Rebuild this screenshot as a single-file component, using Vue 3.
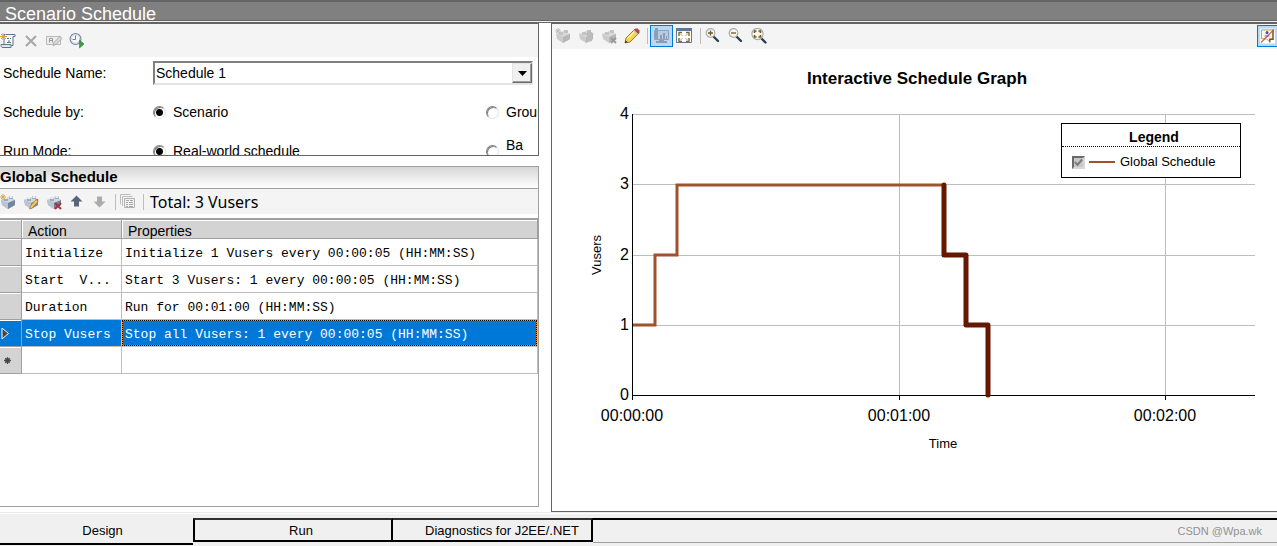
<script setup>
import { ref } from 'vue'

const schedule = ref('Schedule 1')
const scheduleBy = ref('scenario')
const runMode = ref('real')
const activeTab = ref('Design')

const rows = [
  { action: 'Initialize', props: 'Initialize 1 Vusers every 00:00:05 (HH:MM:SS)' },
  { action: 'Start  V...', props: 'Start 3 Vusers: 1 every 00:00:05 (HH:MM:SS)' },
  { action: 'Duration', props: 'Run for 00:01:00 (HH:MM:SS)' },
  { action: 'Stop Vusers', props: 'Stop all Vusers: 1 every 00:00:05 (HH:MM:SS)', selected: true },
]

const yTicks = [
  { label: '4', y: 65 },
  { label: '3', y: 135 },
  { label: '2', y: 206 },
  { label: '1', y: 276 },
]
const xTicks = [
  { label: '00:00:00', x: 80 },
  { label: '00:01:00', x: 347 },
  { label: '00:02:00', x: 613 },
]
const tabs = ['Design', 'Run', 'Diagnostics for J2EE/.NET']
</script>

<template>
  <div class="app">
    <svg class="defs" aria-hidden="true">
      <symbol id="brick" viewBox="0 0 16 16">
        <path d="M1 6l8-3 6 3v5l-7 4-6-4z" fill="#a3b0c0" />
        <path d="M1 6l8-3 6 3-7 3z" fill="#cfd8e3" />
        <path d="M1 6l7 3v6l-6-4z" fill="#b9c5d3" />
        <path d="M8 9l7-3v5l-7 4z" fill="#75859a" />
        <path d="M4 4h4v3H4zM9 2h4v3H9z" fill="#98a8bb" />
        <path d="M4 4c0-1.500 4-1.500 4 0s-4 1.500-4 0zM9 3c0-1.500 4-1.500 4 0s-4 1.500-4 0z" fill="#e6ebf1" />
      </symbol>
      <symbol id="brick-off" viewBox="0 0 16 16">
        <path d="M1 6l8-3 6 3v5l-7 4-6-4z" fill="#cbcbcb" />
        <path d="M1 6l8-3 6 3-7 3z" fill="#d9d9d9" />
        <path d="M8 9l7-3v5l-7 4z" fill="#b6b6b6" />
        <path d="M4 4h4v3H4zM9 2h4v3H9z" fill="#c4c4c4" />
      </symbol>
      <symbol id="lens" viewBox="0 0 16 16">
        <path d="M8.500 8.500l4.500 4.500" stroke="#2c3c57" stroke-width="2.400" stroke-linecap="round" />
        <circle cx="5.500" cy="5" r="4.300" fill="#fbf7e4" stroke="#a9adb3" stroke-width="1.200" />
      </symbol>
    </svg>

    <header class="title"><h1>Scenario Schedule</h1></header>

    <main class="main">
      <div class="left">
        <section class="pane setup">
          <div class="toolbar tall">
            <button type="button" aria-label="New schedule">
              <svg class="icon" viewBox="0 0 16 16">
                <path d="M4 1.500h11v2h-2v9H4z" fill="#f4f7fa" stroke="#5e748f" />
                <path d="M1 11.500h10v3H3c-2 0-2-2-2-3z" fill="#dfe7ef" stroke="#5e748f" />
                <path d="M7 5.500h2M10 5.500h1M7 9.500h4M9 7v2" stroke="#63748a" />
                <path d="M3 0v7M0 3.500h7M1 1l5 5M6 1L1 6" stroke="#dba537" />
              </svg>
            </button>
            <button type="button" aria-label="Delete schedule" disabled>
              <svg class="icon" viewBox="0 0 16 16">
                <path d="M3 3l10 10M13 3L3 13" stroke="#a9a9a9" stroke-width="2.200" />
              </svg>
            </button>
            <button type="button" aria-label="Rename schedule" disabled>
              <svg class="icon" viewBox="0 0 16 16">
                <path d="M.5 3.500h14v8H.5z" fill="#ececec" stroke="#b8b8b8" />
                <path d="M3.500 9.500v-4h3v4M3.500 7.500h3" fill="none" stroke="#9c9c9c" />
                <path d="M7 12.500l1-3 6-6 2 2-6 6z" fill="#dadada" stroke="#aaa" />
              </svg>
            </button>
            <button type="button" aria-label="Start time">
              <svg class="icon" viewBox="0 0 16 16">
                <circle cx="6.500" cy="6" r="5.400" fill="#f5f9fd" stroke="#7487a2" stroke-width="1.200" />
                <circle cx="6.500" cy="6" r="4.200" fill="none" stroke="#cdd9e6" />
                <path d="M6.500 2.500v4h-3" fill="none" stroke="#a37b36" />
                <path d="M10.500 7l4.500 4-4.500 4z" fill="#3f9a46" stroke="#2d7d37" stroke-width=".6" />
              </svg>
            </button>
          </div>
          <form class="form" @submit.prevent>
            <label for="schedule-name">Schedule Name:</label>
            <div class="combo">
              <select id="schedule-name" v-model="schedule">
                <option>Schedule 1</option>
              </select>
              <span class="drop" aria-hidden="true">
                <svg viewBox="0 0 9 5"><path d="M0 0h9L4.500 5z" /></svg>
              </span>
            </div>
            <span id="by-label">Schedule by:</span>
            <div class="options" role="radiogroup" aria-labelledby="by-label">
              <label><input v-model="scheduleBy" type="radio" name="by" value="scenario">Scenario</label>
              <label><input v-model="scheduleBy" type="radio" name="by" value="group">Grou</label>
            </div>
            <span id="mode-label">Run Mode:</span>
            <div class="options" role="radiogroup" aria-labelledby="mode-label">
              <label><input v-model="runMode" type="radio" name="mode" value="real">Real-world schedule</label>
              <label class="raised"><input v-model="runMode" type="radio" name="mode" value="basic"><span>Ba</span></label>
            </div>
          </form>
        </section>

        <section class="pane global">
          <h2>Global Schedule</h2>
          <div class="toolbar">
            <button type="button" aria-label="Add action">
              <svg class="icon" viewBox="0 0 16 16">
                <use href="#brick" />
                <path d="M3 0v6M0 3h6M1 1l4 4M5 1L1 5" stroke="#d9a94c" />
              </svg>
            </button>
            <button type="button" aria-label="Edit action">
              <svg class="icon" viewBox="0 0 16 16">
                <use href="#brick" />
                <path d="M6.500 15l1-3 5.500-6.500 2 2L9 14z" fill="#f3cf55" stroke="#b07a2b" stroke-width=".7" />
                <path d="M13 5.500l1-1 1.500 1.500-1 1z" fill="#c64b4b" />
              </svg>
            </button>
            <button type="button" aria-label="Delete action">
              <svg class="icon" viewBox="0 0 16 16">
                <use href="#brick" />
                <path d="M9 9l6 6M15 9l-6 6" stroke="#a8323c" stroke-width="2" />
              </svg>
            </button>
            <button type="button" aria-label="Move up">
              <svg class="icon" viewBox="0 0 16 16">
                <path d="M7.500 1.500L13.500 7.500h-3.500v5H5v-5H1.500z" fill="#56657b" />
              </svg>
            </button>
            <button type="button" aria-label="Move down" disabled>
              <svg class="icon" viewBox="0 0 16 16">
                <path d="M7.500 13.500L1.500 7.500H5v-5h5v5h3.500z" fill="#ababab" />
              </svg>
            </button>
            <span class="sep"></span>
            <button type="button" aria-label="Copy" disabled>
              <svg class="icon" viewBox="0 0 16 16">
                <path d="M.5 10.500v-10h10M2.500 12v-9.500h10" fill="none" stroke="#bdbdbd" />
                <path d="M4.500 4.500h10v9h-10z" fill="#f1f1f1" stroke="#b0b0b0" />
                <path d="M6 6.500h3M10 6.500h3M6 8.500h2M9 8.500h4M6 10.500h2M9 10.500h4M6 12.500h2M9 12.500h4" stroke="#a6a6a6" />
              </svg>
            </button>
            <span class="sep"></span>
            <span class="total">Total: 3 Vusers</span>
          </div>
          <table class="grid">
            <colgroup><col class="c-mark"><col class="c-action"><col></colgroup>
            <thead>
              <tr><th aria-label="Row"></th><th scope="col">Action</th><th scope="col">Properties</th></tr>
            </thead>
            <tbody>
              <tr v-for="row in rows" :key="row.action" :class="{ selected: row.selected }">
                <th scope="row">
                  <svg v-if="row.selected" class="mark" viewBox="0 0 9 13"><path d="M1 1v11l6.500-5.500z" fill="#4a4643" stroke="#f7f7f7" /></svg>
                </th>
                <td>{{ row.action }}</td>
                <td><div class="value">{{ row.props }}</div></td>
              </tr>
              <tr>
                <th scope="row">
                  <svg class="mark star" viewBox="0 0 8 8"><path d="M4 1v6M1 4h6M2 2l4 4M6 2L2 6" stroke="#444" stroke-width="1.200" /></svg>
                </th>
                <td></td>
                <td></td>
              </tr>
            </tbody>
          </table>
        </section>
      </div>

      <section class="graph">
        <div class="toolbar">
          <button type="button" aria-label="Add action" disabled>
            <svg class="icon" viewBox="0 0 16 16">
              <use href="#brick-off" />
              <path d="M3 0v6M0 3h6M1 1l4 4M5 1L1 5" stroke="#bcbcbc" />
            </svg>
          </button>
          <button type="button" aria-label="Split action" disabled>
            <svg class="icon" viewBox="0 0 16 16">
              <use href="#brick-off" />
              <path d="M9 14V7H7l4-5 5 4-2 1v6z" fill="#bcbcbc" />
            </svg>
          </button>
          <button type="button" aria-label="Delete action" disabled>
            <svg class="icon" viewBox="0 0 16 16">
              <use href="#brick-off" />
              <path d="M10 10l5 5M15 10l-5 5" stroke="#979797" stroke-width="1.800" />
            </svg>
          </button>
          <button type="button" aria-label="Edit mode">
            <svg class="icon" viewBox="0 0 16 16">
              <path d="M1 15l1-5 9-9 4 4-9 9z" fill="#f5d451" stroke="#9b6a1e" stroke-width=".9" />
              <path d="M4 10l7-7" stroke="#fff3a8" stroke-width="1.500" />
              <path d="M10 2l1.500-1.500h2l2 2v2L14 6z" fill="#bd3f49" />
              <path d="M9.500 2.500l4 4" stroke="#c8c8c8" stroke-width="1.200" />
              <path d="M1 15l.7-2.700 2 2z" fill="#333" />
            </svg>
          </button>
          <span class="sep"></span>
          <button type="button" class="on" aria-label="View mode" aria-pressed="true">
            <svg class="icon" viewBox="0 0 16 16">
              <path d="M1.500 2.500h14v9h-14z" fill="#b4cbe2" stroke="#8fa3b8" />
              <path d="M2 0h3v11H2zM7 7h2v4H7zM10 5h2v6h-2zM13 8h1v3h-1z" fill="#8ba0b8" />
              <path d="M6 12h5v1h3v2H3v-2h3z" fill="#899cb2" />
            </svg>
          </button>
          <button type="button" aria-label="Full view">
            <svg class="icon" viewBox="0 0 16 16">
              <path d="M.5.5h15v14H.5z" fill="#fff" stroke="#61779a" />
              <path d="M0 0h16v3H0z" fill="#5f779c" />
              <path d="M3 8V4.500h3M10 4.500h3V8M13 10v3.500h-3M6 13.500H3V10" fill="none" stroke="#7b6a35" stroke-width="1.400" />
              <path d="M4 5.500l2.500 2.500M12 5.500L9.500 8M4 12.500L6.500 10M12 12.500L9.500 10" stroke="#b9a668" />
            </svg>
          </button>
          <span class="sep wide"></span>
          <button type="button" aria-label="Zoom in">
            <svg class="icon" viewBox="0 0 16 16"><use href="#lens" /><path d="M5.500 2.500v5M3 5h5" stroke="#6b5a2a" stroke-width="1.300" /></svg>
          </button>
          <button type="button" aria-label="Zoom out">
            <svg class="icon" viewBox="0 0 16 16"><use href="#lens" /><path d="M3 5h5" stroke="#6b5a2a" stroke-width="1.300" /></svg>
          </button>
          <button type="button" aria-label="Zoom to fit">
            <svg class="icon" viewBox="0 0 16 16">
              <path d="M10.500 10.500l4 4" stroke="#2c3c57" stroke-width="2.400" stroke-linecap="round" />
              <circle cx="6.500" cy="6" r="5.600" fill="#fbf7e4" stroke="#a9adb3" stroke-width="1.200" />
              <path d="M3.500 5V3h2M7.500 3h2v2M9.500 7v2h-2M5.500 9h-2V7" fill="none" stroke="#6b5a2a" stroke-width="1.600" />
            </svg>
          </button>
          <button type="button" class="on last" aria-label="Hide tips" aria-pressed="true">
            <svg class="icon" viewBox="0 0 16 16">
              <path d="M0 0h16v16H0z" fill="#fff" />
              <path d="M1.500 1.500h12v9.500H10v3l-3-3H1.500z" fill="#fdf8e6" stroke="#b5974c" />
              <path d="M14 1v10.500h-3.500V15" fill="none" stroke="#6b5320" stroke-width="1.300" />
              <path d="M6.500 3.500h2v2h-2zM5 8h5" fill="#4a4bc0" stroke="#4a4bc0" />
              <path d="M1 15L15 1" stroke="#cc4a58" stroke-width="1.200" />
            </svg>
          </button>
        </div>

        <div class="chart">
          <svg class="plot" viewBox="0 0 725 450" role="img" aria-label="Interactive Schedule Graph">
            <text class="heading" x="365" y="35">Interactive Schedule Graph</text>
            <g class="lines">
              <rect v-for="t in yTicks" :key="t.label" x="80" :y="t.y" width="623" height="1" />
              <rect v-for="t in xTicks.slice(1)" :key="t.label" :x="t.x" y="65" width="1" height="281" />
            </g>
            <path class="run" d="M81 276H103V206H125V136H392" />
            <g class="axes">
              <rect x="80" y="65" width="1" height="285" />
              <rect x="80" y="346" width="623" height="1" />
              <rect v-for="t in xTicks" :key="t.label" :x="t.x" y="346" width="1" height="5" />
            </g>
            <path class="stop" d="M392 136V206H414V276H436V346" />
            <g class="ylabels">
              <text v-for="t in yTicks" :key="t.label" x="77" :y="t.y + 5">{{ t.label }}</text>
              <text x="77" y="351">0</text>
            </g>
            <g class="xlabels">
              <text v-for="t in xTicks" :key="t.label" :x="t.x" y="372">{{ t.label }}</text>
            </g>
            <text class="axis-name" x="391" y="399">Time</text>
            <text class="axis-name" transform="translate(49 206) rotate(-90)">Vusers</text>
          </svg>
          <div class="legend">
            <h3>Legend</h3>
            <label>
              <input type="checkbox" checked disabled>
              <svg class="tick" viewBox="0 0 9 9" aria-hidden="true"><path d="M1 4l2.500 3L8 1.500" /></svg>
              <span class="swatch"></span>
              Global Schedule
            </label>
          </div>
        </div>
      </section>
    </main>

    <nav class="tabs">
      <button
        v-for="(tab, i) in tabs"
        :key="tab"
        type="button"
        :class="['tab', 'tab-' + i, { active: tab === activeTab }]"
        @click="activeTab = tab"
      >{{ tab }}</button>
      <div class="rest">CSDN @Wpa.wk</div>
    </nav>
  </div>
</template>

<style>
body {
  background: #fff;
}
</style>

<style scoped>
.app,
.app * {
  box-sizing: border-box;
}
.app {
  min-height: 100vh;
  display: flex;
  flex-direction: column;
  font: 14px/16px "Liberation Sans", Arial, sans-serif;
  color: #000;
  background: #fff;
}
h1,
h2,
h3 {
  margin: 0;
}
button,
select {
  font: inherit;
  color: inherit;
}
.defs {
  position: absolute;
  width: 0;
  height: 0;
}
.title {
  height: 22px;
  padding-left: 5px;
  background: #808080;
  border-top: 2px solid #646464;
  border-bottom: 1px solid #f0f0f0;
  box-shadow: inset 0 -1px #646464;
}
h1 {
  font-size: 18px;
  line-height: 24px;
  font-weight: normal;
  color: #fff;
}
.main {
  flex: 1;
  display: grid;
  grid-template-columns: 539fr 726fr;
  column-gap: 12px;
  border-top: 1px solid #646464;
}
.left {
  min-width: 0;
  display: flex;
  flex-direction: column;
  gap: 10px;
  padding-bottom: 5px;
}
.pane {
  border: 1px solid #a0a0a0;
  border-left: 0;
  overflow: hidden;
}
.setup {
  height: 133px;
  border-color: #646464;
}
.global {
  flex: 1;
}
.toolbar {
  height: 25px;
  display: flex;
  align-items: center;
  gap: 7px;
  background: #f4f4f4;
}
.toolbar button {
  flex: none;
  display: flex;
  padding: 0;
  border: 0;
  background: none;
}
.toolbar.tall {
  height: 33px;
}
.icon {
  display: block;
  width: 16px;
  height: 16px;
  fill: none;
}
.sep {
  width: 1px;
  height: 16px;
  margin-right: -3px;
  background: #bdbdbd;
}
.total {
  padding-left: 2px;
  font: 16px/20px "Noto Sans", "Open Sans", sans-serif;
}
.form {
  display: grid;
  grid-template-columns: 150px minmax(0, 1fr);
  grid-auto-rows: 24px;
  row-gap: 15px;
  align-items: center;
  padding: 4px 0 0 3px;
}
.combo {
  position: relative;
  margin-right: 5px;
}
.combo select {
  display: block;
  width: 100%;
  height: 24px;
  padding: 0 20px 0 1px;
  appearance: none;
  border: 2px solid;
  border-color: #808080 #e3e3e3 #e3e3e3 #808080;
  border-radius: 0;
  background: #fff;
}
.drop {
  position: absolute;
  top: 2px;
  right: 1px;
  width: 20px;
  height: 20px;
  display: grid;
  place-items: center;
  pointer-events: none;
  background: #f0f0f0;
  border: 1px solid;
  border-color: #e3e3e3 #696969 #696969 #e3e3e3;
  box-shadow: inset -1px -1px #a0a0a0;
}
.drop svg {
  width: 9px;
  height: 5px;
}
.options {
  display: flex;
  justify-content: space-between;
  white-space: nowrap;
}
.options label {
  display: flex;
  align-items: center;
  gap: 7px;
}
.options label:last-child {
  width: 52px;
}
.options input {
  flex: none;
  appearance: none;
  width: 13px;
  height: 13px;
  margin: 0;
  border: 1px solid;
  border-color: #808080 #e3e3e3 #e3e3e3 #808080;
  border-radius: 50%;
  box-shadow: inset 1px 1px #808080;
}
.options input:checked {
  background: radial-gradient(circle, #000 3px, #fff 4px);
}
.raised span {
  padding-bottom: 12px;
}
h2 {
  height: 22px;
  font-size: 15px;
  line-height: 20px;
  background: linear-gradient(#d6d6d6, #fff);
  border-bottom: 1px solid #a0a0a0;
}
.grid {
  width: 100%;
  margin-top: 4px;
  table-layout: fixed;
  border-collapse: separate;
  border-spacing: 0;
  border-top: 2px solid #a0a0a0;
}
.c-mark {
  width: 22px;
}
.c-action {
  width: 100px;
}
.grid th {
  height: 27px;
  padding: 0 0 0 1px;
  background: #d3d3d3;
  border-right: 1px solid #a0a0a0;
  border-bottom: 1px solid #a0a0a0;
  box-shadow: inset 0 1px #fff;
  text-align: left;
  font-weight: normal;
}
.grid thead th {
  height: 19px;
  padding: 4px 0 0 6px;
  line-height: 14px;
  box-shadow: inset 1px 1px #fff;
}
.grid thead th:first-child {
  box-shadow: inset 0 1px #fff;
}
.grid td {
  height: 27px;
  padding: 3px 0 0 3px;
  border-right: 1px solid #bdbdbd;
  border-bottom: 1px solid #bdbdbd;
  font: 13px/16px "Liberation Mono", "Courier New", monospace;
  white-space: pre;
  overflow: hidden;
}
.grid .selected th,
.grid .selected td {
  background: #0078d7;
  color: #fff;
}
.grid .selected td:last-child {
  padding: 0;
}
.selected .value {
  height: 26px;
  padding-left: 2px;
  line-height: 27px;
  border: 1px dotted #000;
  background: linear-gradient(#0078d7, #0078d7) padding-box, #ff8728 border-box;
}
.mark {
  display: block;
  width: 9px;
  height: 13px;
  fill: none;
}
.star {
  margin-left: 2px;
}
.graph {
  min-width: 0;
  border: 1px solid #646464;
  border-right: 0;
}
.graph .toolbar {
  padding: 0 0 1px 3px;
}
.graph .toolbar .on {
  width: 23px;
  height: 22px;
  padding: 2px;
  background: #b9d8f3;
  border: 1px solid #0078d7;
}
.graph .sep {
  margin-right: -5px;
}
.graph .on + button {
  margin-left: -4px;
}
.graph .sep.wide {
  margin-left: 1px;
  margin-right: -3px;
}
.graph .toolbar .last {
  width: 20px;
  margin-left: auto;
  border-right: 0;
}
.chart {
  position: relative;
}
.plot {
  display: block;
  width: 100%;
  height: auto;
}
.plot text {
  text-anchor: middle;
  font-size: 16px;
}
.plot .heading {
  font-size: 17px;
  font-weight: bold;
}
.plot .axis-name {
  font-size: 13px;
}
.plot .ylabels text {
  text-anchor: end;
}
.lines {
  fill: #bdbdbd;
}
.run,
.stop {
  fill: none;
  stroke: #a0522d;
  stroke-width: 3;
}
.stop {
  stroke: #641800;
  stroke-width: 5;
  stroke-linecap: round;
  stroke-linejoin: round;
}
.legend {
  position: absolute;
  top: 74px;
  right: 36px;
  width: 180px;
  background: #fff;
  border: 1px solid #000;
}
h3 {
  padding-top: 4px;
  font-size: 14px;
  line-height: 18px;
  text-align: center;
  padding-left: 6px;
  border-bottom: 1px dotted #000;
}
.legend label {
  position: relative;
  display: flex;
  align-items: center;
  height: 30px;
  padding-left: 10px;
  font-size: 13px;
}
.legend input {
  appearance: none;
  width: 13px;
  height: 13px;
  margin: 0;
  background: #c8c8c8;
  border: 2px solid;
  border-color: #696969 #d8d8d8 #d8d8d8 #696969;
}
.tick {
  position: absolute;
  left: 12px;
  width: 9px;
  height: 9px;
  fill: none;
  stroke: #7c7c7c;
  stroke-width: 2;
}
.swatch {
  width: 26px;
  height: 2px;
  margin: 0 5px 0 4px;
  background: #a0522d;
}
.tabs {
  display: flex;
  height: 34px;
  padding-top: 1px;
  background: #f0f0f0;
  border-top: 1px solid #e8e8e8;
  box-shadow: inset 0 1px #fff;
}
.tab {
  height: 24px;
  margin-top: 4px;
  padding: 1px 0 0;
  font-size: 13px;
  text-align: center;
  background: #f0f0f0;
  border: 0 solid #000;
  border-width: 2px 2px 2px 0;
  border-top-color: #303030;
}
.tab-0 {
  flex: 0 1 193px;
  padding-left: 12px;
}
.tab-1 {
  flex: 0 1 200px;
  padding-left: 16px;
  border-left-width: 2px;
}
.tab-2 {
  flex: 0 1 200px;
  padding-left: 20px;
}
.tab.active {
  height: 31px;
  margin-top: 0;
  padding-top: 5px;
  border-top: 0;
  border-right: 0;
}
.rest {
  flex: 1;
  height: 25px;
  margin-top: 4px;
  padding-right: 15px;
  text-align: right;
  font: 11px/22px "Liberation Sans", Arial, sans-serif;
  color: #909090;
  border-top: 2px solid #000;
  border-bottom: 1px solid #a0a0a0;
}
</style>
